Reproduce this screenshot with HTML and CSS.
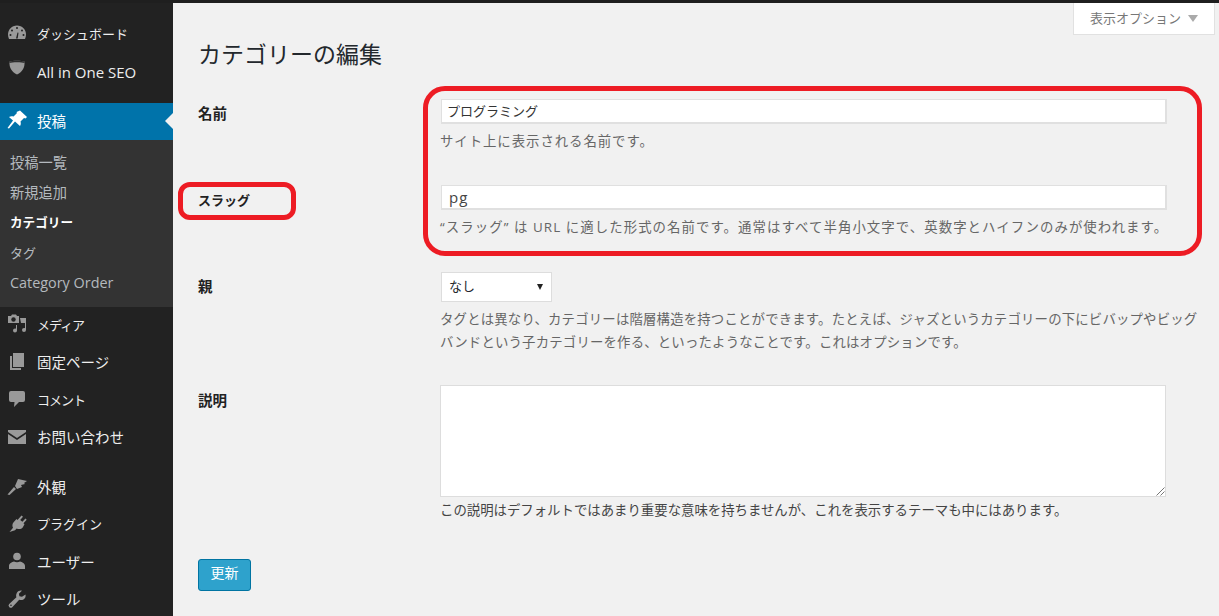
FILE: index.html
```html
<!DOCTYPE html>
<html lang="ja">
<head>
<meta charset="utf-8">
<title>カテゴリーの編集</title>
<link rel="stylesheet" href="styles.css">
</head>
<body>
<div class="topbar"></div>
<div class="shell">
  <nav class="sidebar">
    <div class="group group-first">
      <a class="item"><svg class="icon" viewBox="0 0 20 20"><path d="M10 2.500C4.800 2.500 1 6.600 1 11.500c0 1.600.4 3 1 4.500h16c.6-1.500 1-2.900 1-4.500 0-4.900-3.800-9-9-9z"/><path class="cut" d="M9 15.500l1.500-6 1 .3-.8 5.700z"/><circle class="cut" cx="10" cy="5" r="1"/><circle class="cut" cx="5" cy="7.500" r="1"/><circle class="cut" cx="15" cy="7.500" r="1"/><circle class="cut" cx="3.500" cy="12" r="1"/><circle class="cut" cx="16.500" cy="12" r="1"/></svg><span>ダッシュボード</span></a>
      <a class="item"><svg class="icon icon-up" viewBox="0 0 20 20"><path d="M2.500 3.500C5 2.500 15 2.500 17.500 3.500c.5 6-2 10.500-7.500 13C4.500 14 2 9.500 2.500 3.500z"/><path class="shade" d="M2.500 3.500C5 2.500 15 2.500 17.500 3.500l0 1.500C15 4 5 4 2.500 5z"/></svg><span class="latin-item">All in One SEO</span></a>
    </div>
    <div class="current">
      <a class="item item-active"><svg class="icon icon-white" viewBox="0 0 20 20"><path d="M13 .5L20 7l-1.500 1.500-1.500-.5-3.500 3.500c.5 1.500.5 3-.5 4.500L8 11.500 2 18.500.5 18 6 10.500 2 7c1.500-1 3-1 4.500-.5L10 3l-.5-1z"/></svg><span class="kanji">投稿</span></a>
      <ul class="submenu">
        <li class="kanji-sub">投稿一覧</li>
        <li class="kanji-sub">新規追加</li>
        <li class="sub-current">カテゴリー</li>
        <li>タグ</li>
        <li class="sub-latin">Category Order</li>
      </ul>
    </div>
    <div class="group group-mid">
      <a class="item"><svg class="icon" viewBox="0 0 20 20"><path d="M1 2h3l1-1.500h4L10 2h2v7H1z"/><circle class="cut" cx="6.500" cy="5.500" r="2.200"/><path d="M9 11h1v5.500a2 2 0 1 1-2-2c.4 0 .7.100 1 .2zM13 4h6v12a2 2 0 1 1-2-2c.4 0 .7.100 1 .2V9h-4z"/></svg><span class="narrow">メディア</span></a>
      <a class="item"><svg class="icon" viewBox="0 0 20 20"><path d="M6 1h11v14H6z"/><path d="M3 4h2v12h9v2H3z"/></svg><span class="kanji">固定ページ</span></a>
      <a class="item"><svg class="icon" viewBox="0 0 20 20"><path d="M4 2h12a2 2 0 0 1 2 2v7a2 2 0 0 1-2 2h-4l-5 5 .5-5H4a2 2 0 0 1-2-2V4a2 2 0 0 1 2-2z"/></svg><span class="narrow">コメント</span></a>
      <a class="item"><svg class="icon" viewBox="0 0 20 20"><path d="M1 3h18v2l-9 6-9-6z"/><path d="M1 7l9 6 9-6v10H1z"/></svg><span class="kanji">お問い合わせ</span></a>
    </div>
    <div class="group group-last">
      <a class="item"><svg class="icon" viewBox="0 0 20 20"><path d="M.5 18.500L7 11l2 2-6.500 6z"/><path d="M8 10l3-7 9 2-3 2 1 1-4 1 1 2-5 2z"/></svg><span class="kanji">外観</span></a>
      <a class="item"><svg class="icon" viewBox="0 0 20 20"><path d="M14.500 1.500l1.500 1.200-2.800 3.300 2.200 1.800 3-3.300 1.300 1.300-3.200 3.500 1 1-1.800 3.200c-1.500 1.800-4 2-6 1l-1.700 1.800-5.500 1.700 3.500-4.300c-1-2-.7-4.300.8-5.800L9.500 5l1 1z"/></svg><span>プラグイン</span></a>
      <a class="item"><svg class="icon" viewBox="0 0 20 20"><circle cx="10" cy="5.500" r="3.800"/><path d="M2 18v-3c0-2.500 3-4 5-4.500 1.500 1 4.500 1 6 0 2 .5 5 2 5 4.500v3z"/></svg><span class="kanji">ユーザー</span></a>
      <a class="item"><svg class="icon" viewBox="0 0 20 20"><path fill-rule="evenodd" d="M18.500 5.500c.5 2-.3 4-2 5-1.500.8-3 .7-4.300.3L5.500 18a2.200 2.200 0 0 1-3.300-3l7.200-6.800c-.5-1.500-.3-3 .5-4.500 1.100-1.700 3-2.400 5-2l-3 3 .5 2.500 2.600.5zM4 15.500a.8.8 0 1 0 0 1.600.8.8 0 0 0 0-1.600z"/></svg><span class="kanji">ツール</span></a>
    </div>
  </nav>
  <main class="content">
    <div class="screen-meta"><button class="options-tab" type="button">表示オプション<i class="caret"></i></button></div>
    <h1 class="title">カテゴリーの編集</h1>
    <div class="form">
      <div class="row row-name">
        <div class="label">名前</div>
        <div class="field">
          <div class="input">プログラミング</div>
          <p class="desc desc-loose">サイト上に表示される名前です。</p>
        </div>
      </div>
      <div class="row row-slug">
        <div class="label label-kana">スラッグ</div>
        <div class="field">
          <div class="input input-latin">pg</div>
          <p class="desc desc-loose desc-slug">“スラッグ” は URL に適した形式の名前です。通常はすべて半角小文字で、英数字とハイフンのみが使われます。</p>
        </div>
      </div>
      <div class="row row-parent">
        <div class="label">親</div>
        <div class="field">
          <div class="select">なし<i class="select-caret"></i></div>
          <p class="desc desc-wide">タグとは異なり、カテゴリーは階層構造を持つことができます。たとえば、ジャズというカテゴリーの下にビバップやビッグバンドという子カテゴリーを作る、といったようなことです。これはオプションです。</p>
        </div>
      </div>
      <div class="row row-desc">
        <div class="label">説明</div>
        <div class="field">
          <div class="textarea"><svg class="grip" viewBox="0 0 10 10"><path d="M9.500 1.500l-8 8M9.500 5.500l-4 4"/></svg></div>
          <p class="desc desc-dark">この説明はデフォルトではあまり重要な意味を持ちませんが、これを表示するテーマも中にはあります。</p>
        </div>
      </div>
    </div>
    <button class="submit" type="button">更新</button>
    <div class="mark mark-fields"></div>
    <div class="mark mark-slug"></div>
  </main>
</div>
</body>
</html>
```
FILE: styles.css
```css
* { box-sizing: border-box; }
html, body { margin: 0; padding: 0; height: 100%; overflow: hidden; }
body {
  background: #f1f1f1;
  color: #23282d;
  font-family: "Open Sans", "Noto Sans CJK JP", sans-serif;
  font-size: 13px;
}
.topbar { height: 3px; background: #1f1f1f; }
.shell { display: flex; height: 613px; }
.sidebar { width: 173px; flex: none; background: #222; color: #eee; overflow: hidden; }
.group-first { padding-top: 13px; height: 100px; }
.group-mid { height: 162px; }
.item { display: flex; align-items: center; height: 37.5px; font-size: 13px; }
.item span { margin-left: 10px; padding-bottom: 3px; }
.item .kanji { font-size: 14.5px; }
.item .narrow { font-size: 13px; letter-spacing: -1px; }
.icon { width: 20px; height: 20px; margin-left: 7px; flex: none; margin-top: -3px; fill: #999; }
.icon .cut { fill: #222; }
.icon .shade { fill: #2c2c2c; }
.icon-up { margin-top: -9px; }
.icon-white { fill: #fff; }
.item .latin-item { font-size: 15px; font-weight: 500; padding-bottom: 1px; }
.current { background: #333; height: 204px; }
.item-active { position: relative; background: #0073aa; color: #fff; height: 37px; }
.item-active::after {
  content: "";
  position: absolute;
  right: 0;
  top: 10px;
  border: 8px solid transparent;
  border-right-color: #f1f1f1;
  border-left: 0;
}
.submenu { list-style: none; margin: 0; padding: 8px 0 0 10px; color: #b4b9be; font-size: 13px; }
.submenu li { height: 30px; line-height: 30px; }
.submenu .kanji-sub { font-size: 14.25px; }
.sub-current { color: #fff; font-weight: 700; font-size: 12.600px; }
.submenu .sub-latin { font-size: 14.400px; }
.content { flex: 1; position: relative; padding: 0 25px; min-width: 0; }
.screen-meta { display: flex; justify-content: flex-end; padding-right: 4px; margin-right: -25px; height: 32px; }
.options-tab {
  width: 142px;
  height: 32px;
  background: #fff;
  border: 1px solid #e1e1e1;
  border-top: 0;
  color: #777;
  font: inherit;
  font-size: 13px;
  padding: 0 0 3px;
  display: flex;
  align-items: center;
  justify-content: center;
}
.caret { margin: 3px 0 0 7px; border: 5px solid transparent; border-top: 7px solid #aaa; border-bottom: 0; }
.title { margin: 0; font-size: 23px; font-weight: 400; line-height: 30px; padding-top: 4px; color: #23282d; height: 64px; }
.row { display: flex; }
.label { width: 242px; flex: none; font-weight: 700; font-size: 14.500px; line-height: 20px; color: #222; padding-top: 5px; }
.label-kana { font-size: 13px; }
.row-name { height: 86px; }
.row-slug { height: 87px; }
.row-parent { height: 113px; }
.row-desc { height: 174px; }
.row-desc .label { padding-top: 6px; }
.field { width: 726px; }
.row-parent .field, .row-desc .field { width: 780px; }
.input {
  height: 25px;
  width: 726px;
  margin-left: 1px;
  background: #fff;
  border: 2px solid #e0e0e0;
  border-width: 1px 2px 2px 1px;
  font-size: 13px;
  line-height: 22px;
  padding-left: 5px;
  color: #333;
}
.input-latin { font-size: 15px; letter-spacing: 1px; padding-left: 7px; color: #444; }
.desc { margin: 7px 0 0; font-size: 13.400px; line-height: 20px; color: #666; white-space: nowrap; }
.desc-loose { letter-spacing: .95px; }
.desc-slug { letter-spacing: 1.080px; }
.desc-wide { width: 768px; line-height: 23px; margin-top: 6px; white-space: normal; letter-spacing: .18px; }
.desc-dark { color: #444; margin-top: 3px; }
.select {
  width: 111px;
  height: 30px;
  margin-left: 1px;
  background: #fff;
  border: 1px solid #ddd;
  line-height: 26px;
  padding-left: 7px;
  font-size: 13px;
  position: relative;
}
.select-caret { position: absolute; right: 8px; top: 11px; border: 3.500px solid transparent; border-top: 6px solid #222; border-bottom: 0; }
.textarea { width: 726px; height: 112px; background: #fff; border: 1px solid #ddd; position: relative; }
.grip { position: absolute; right: 0; bottom: 0; width: 10px; height: 10px; fill: none; stroke: #777; }
.submit {
  display: block;
  width: 53px;
  height: 32px;
  background: #2ea2cc;
  border: 1px solid #0074a2;
  border-radius: 3px;
  color: #fff;
  font: inherit;
  font-size: 14px;
  line-height: 26px;
  padding: 0 0 4px;
}
.mark { position: absolute; border: 5px solid #ed1c24; pointer-events: none; }
.mark-fields { left: 250px; top: 83px; width: 779px; height: 170px; border-radius: 22px; }
.mark-slug { left: 5px; top: 179px; width: 118px; height: 38px; border-radius: 12px; }
```
